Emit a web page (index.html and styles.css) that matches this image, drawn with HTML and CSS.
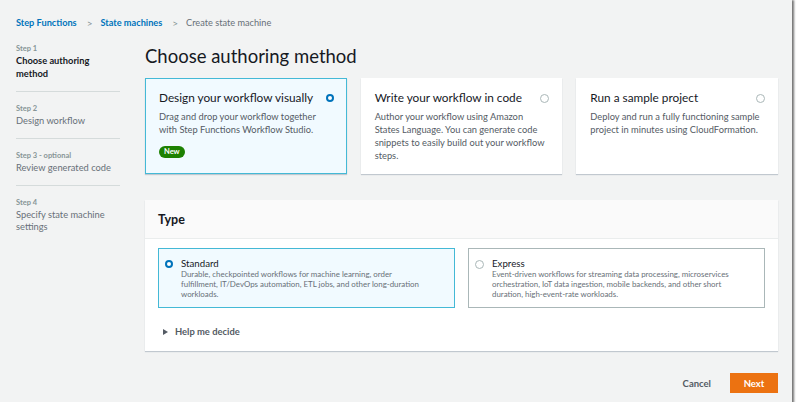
FILE: index.html
```html
<!DOCTYPE html>
<html lang="en">
<head>
    <meta charset="UTF-8">
    <title>Create state machine</title>
    <link rel="stylesheet" href="styles.css">
</head>
<body>

<div class="window">
    <!-- breadcrumbs -->
    <nav class="crumbs">
        <a href="#">Step Functions</a>
        <span class="sep">&gt;</span>
        <a href="#">State machines</a>
        <span class="sep">&gt;</span>
        <span class="current">Create state machine</span>
    </nav>

    <div class="layout">
        <!-- wizard steps -->
        <ul class="steps">
            <li class="active">
                <small>Step 1</small>
                <span>Choose authoring method</span>
            </li>
            <li>
                <small>Step 2</small>
                <span>Design workflow</span>
            </li>
            <li>
                <small>Step 3 - optional</small>
                <span>Review generated code</span>
            </li>
            <li>
                <small>Step 4</small>
                <span>Specify state machine settings</span>
            </li>
        </ul>

        <main class="main">
            <h1>Choose authoring method</h1>

            <div class="methods">
                <div class="method selected">
                    <div class="method-head">
                        <h3>Design your workflow visually</h3>
                        <span class="radio on"></span>
                    </div>
                    <p>Drag and drop your workflow together with Step Functions Workflow Studio.</p>
                    <span class="badge">New</span>
                </div>
                <div class="method">
                    <div class="method-head">
                        <h3>Write your workflow in code</h3>
                        <span class="radio"></span>
                    </div>
                    <p>Author your workflow using Amazon States Language. You can generate code snippets to easily build out your workflow steps.</p>
                </div>
                <div class="method">
                    <div class="method-head">
                        <h3>Run a sample project</h3>
                        <span class="radio"></span>
                    </div>
                    <p>Deploy and run a fully functioning sample project in minutes using CloudFormation.</p>
                </div>
            </div>

            <section class="panel">
                <div class="panel-head">Type</div>
                <div class="panel-body">
                    <div class="tiles">
                        <div class="tile selected">
                            <span class="radio on"></span>
                            <div>
                                <h4>Standard</h4>
                                <p>Durable, checkpointed workflows for machine learning, order fulfillment, IT/DevOps automation, ETL jobs, and other long-duration workloads.</p>
                            </div>
                        </div>
                        <div class="tile">
                            <span class="radio"></span>
                            <div>
                                <h4>Express</h4>
                                <p>Event-driven workflows for streaming data processing, microservices orchestration, IoT data ingestion, mobile backends, and other short duration, high-event-rate workloads.</p>
                            </div>
                        </div>
                    </div>
                    <div class="expand">
                        <span class="caret"></span>
                        Help me decide
                    </div>
                </div>
            </section>

            <div class="actions">
                <button class="link-btn">Cancel</button>
                <button class="primary-btn">Next</button>
            </div>
        </main>
    </div>
</div>

</body>
</html>
```

FILE: styles.css
```css
body {
    margin: 0;
    background-color: #ffffff;
    font-family: Lato, "Open Sans", Arial, sans-serif;
    color: #16191f;
}
.window {
    width: 792px;
    height: 402px;
    background-color: #f2f3f3;
    box-shadow: 1px 1px 2px 1px rgba(0, 0, 0, 0.55);
    box-sizing: border-box;
    padding: 16px 14px 0 16px;
}
.crumbs {
    font-size: 9.2px;
    height: 14px;
    line-height: 14px;
    display: flex;
    align-items: center;
}
.crumbs a {
    color: #0073bb;
    text-decoration: none;
    font-weight: 700;
}
.crumbs .sep {
    color: #879596;
    margin: 0 8px 0 10px;
    font-size: 10px;
}
.crumbs .current {
    color: #687078;
}
.layout {
    display: grid;
    grid-template-columns: 104px 1fr;
    column-gap: 25px;
    margin-top: 13px;
}
.steps {
    list-style: none;
    margin: 0;
    padding: 0;
}
.steps li {
    border-bottom: 1px solid #d5dbdb;
    padding: 11px 0 10.5px;
    color: #687078;
}
.steps li:first-child {
    padding-top: 0;
}
.steps li:last-child {
    border-bottom: none;
}
.steps small {
    display: block;
    font-size: 7.5px;
    font-weight: 700;
    color: #879596;
    line-height: 12px;
}
.steps span {
    display: block;
    font-size: 9.3px;
    line-height: 12.5px;
}
.steps li.active span {
    color: #16191f;
    font-weight: 700;
}
.main h1 {
    font-size: 18.5px;
    font-weight: 400;
    margin: 0 0 9px;
    line-height: 26px;
}
.methods {
    display: grid;
    grid-template-columns: repeat(3, 1fr);
    gap: 14px;
}
.method {
    background-color: #ffffff;
    height: 96px;
    box-sizing: border-box;
    padding: 10px 12px 11px 13px;
    border: 1px solid #ffffff;
    box-shadow: 0 1px 1px rgba(0, 31, 63, 0.2);
}
.method.selected {
    background-color: #f1faff;
    border-color: #44b9d6;
}
.method-head {
    display: flex;
    justify-content: space-between;
    align-items: center;
}
.method h3 {
    font-size: 11.8px;
    font-weight: 400;
    margin: 0;
    line-height: 18px;
}
.method p {
    font-size: 9.3px;
    color: #545b64;
    line-height: 13px;
    margin: 3px 0 2px;
}
.radio {
    width: 7px;
    height: 7px;
    border-radius: 50%;
    border: 1px solid #aab7b8;
    background-color: #ffffff;
    flex-shrink: 0;
}
.radio.on {
    border: 2.5px solid #0073bb;
    width: 4px;
    height: 4px;
}
.badge {
    display: inline-block;
    background-color: #1d8102;
    color: #ffffff;
    font-size: 7.5px;
    font-weight: 700;
    line-height: 10px;
    padding: 1px 5px;
    border-radius: 8px;
}
.panel {
    background-color: #ffffff;
    margin-top: 26px;
    box-shadow: 0 1px 1px rgba(0, 31, 63, 0.2);
}
.panel-head {
    background-color: #fafafa;
    border-bottom: 1px solid #eaeded;
    font-size: 12.5px;
    font-weight: 700;
    padding: 11px 13px 10px;
    line-height: 17px;
}
.panel-body {
    padding: 9px 13px 14px;
}
.tiles {
    display: grid;
    grid-template-columns: 1fr 1fr;
    gap: 13px;
}
.tile {
    display: flex;
    gap: 8px;
    border: 1px solid #aab7b8;
    padding: 8px 33px 9px 6px;
    height: 60px;
    box-sizing: border-box;
}
.tile.selected {
    background-color: #f1faff;
    border-color: #44b9d6;
}
.tile .radio {
    margin-top: 3px;
}
.tile h4 {
    font-size: 9.7px;
    font-weight: 400;
    margin: 0;
    line-height: 12px;
}
.tile p {
    font-size: 7.9px;
    color: #687078;
    margin: 0;
    line-height: 10px;
}
.expand {
    display: flex;
    align-items: center;
    gap: 7px;
    margin-top: 18px;
    margin-left: 5px;
    font-size: 9.4px;
    font-weight: 700;
    color: #545b64;
}
.caret {
    width: 0;
    height: 0;
    border-top: 3.5px solid transparent;
    border-bottom: 3.5px solid transparent;
    border-left: 5px solid #545b64;
}
.actions {
    display: flex;
    justify-content: flex-end;
    align-items: center;
    gap: 19px;
    margin-top: 22px;
}
.link-btn {
    background: none;
    border: none;
    font-family: inherit;
    font-size: 9.5px;
    font-weight: 700;
    color: #545b64;
    padding: 0;
}
.primary-btn {
    background-color: #ec7211;
    color: #ffffff;
    border: none;
    font-family: inherit;
    font-size: 9.5px;
    font-weight: 700;
    width: 48px;
    height: 20px;
    padding: 0;
}
```
